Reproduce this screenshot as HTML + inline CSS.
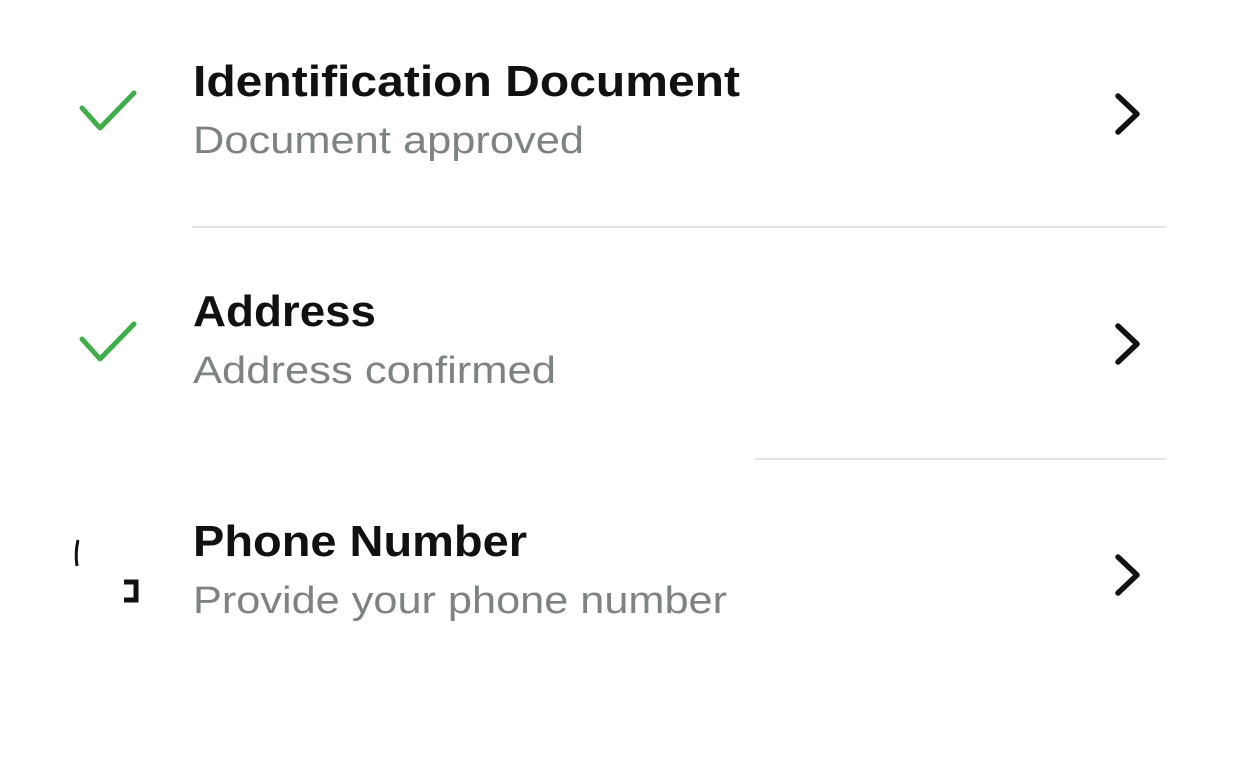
<!DOCTYPE html>
<html><head><style>
html,body{margin:0;padding:0;background:#fff;width:1241px;height:769px;overflow:hidden}
</style></head><body>
<svg width="1241" height="769" xmlns="http://www.w3.org/2000/svg" style="display:block">
<rect width="1241" height="769" fill="#fff"/>
<g font-family="Liberation Sans, sans-serif">
<text x="193" y="96" font-size="44" font-weight="bold" fill="#111" textLength="547" lengthAdjust="spacingAndGlyphs">Identification Document</text>
<text x="193" y="153" font-size="38" fill="#7d837f" textLength="391" lengthAdjust="spacingAndGlyphs">Document approved</text>
<text x="193" y="326" font-size="44" font-weight="bold" fill="#111" textLength="183" lengthAdjust="spacingAndGlyphs">Address</text>
<text x="193" y="383" font-size="38" fill="#7d837f" textLength="363" lengthAdjust="spacingAndGlyphs">Address confirmed</text>
<text x="193" y="556" font-size="44" font-weight="bold" fill="#111" textLength="334" lengthAdjust="spacingAndGlyphs">Phone Number</text>
<text x="193" y="613" font-size="38" fill="#7d837f" textLength="534" lengthAdjust="spacingAndGlyphs">Provide your phone number</text>
</g>
<g fill="none" stroke="#3fae4a" stroke-width="5" stroke-linecap="round" stroke-linejoin="round">
<path d="M82 108 L100 128 L134 93"/>
<path d="M82 339 L100 359 L134 324"/>
</g>
<g fill="none" stroke="#111" stroke-width="5.5" stroke-linecap="round" stroke-linejoin="round">
<path d="M1118 96 L1137 114 L1118 132"/>
<path d="M1118 326 L1137 344 L1118 362"/>
<path d="M1118 557 L1137 575 L1118 593"/>
</g>
<line x1="192" y1="227" x2="1166" y2="227" stroke="#e4e4e4" stroke-width="2"/>
<line x1="755" y1="459" x2="1166" y2="459" stroke="#e4e4e4" stroke-width="2"/>
<path d="M78 540 Q75 553 77 566" stroke="#111" stroke-width="3" fill="none"/>
<path d="M124 582 H136 V600 H124" stroke="#111" stroke-width="5" fill="none"/>
</svg>
</body></html>
